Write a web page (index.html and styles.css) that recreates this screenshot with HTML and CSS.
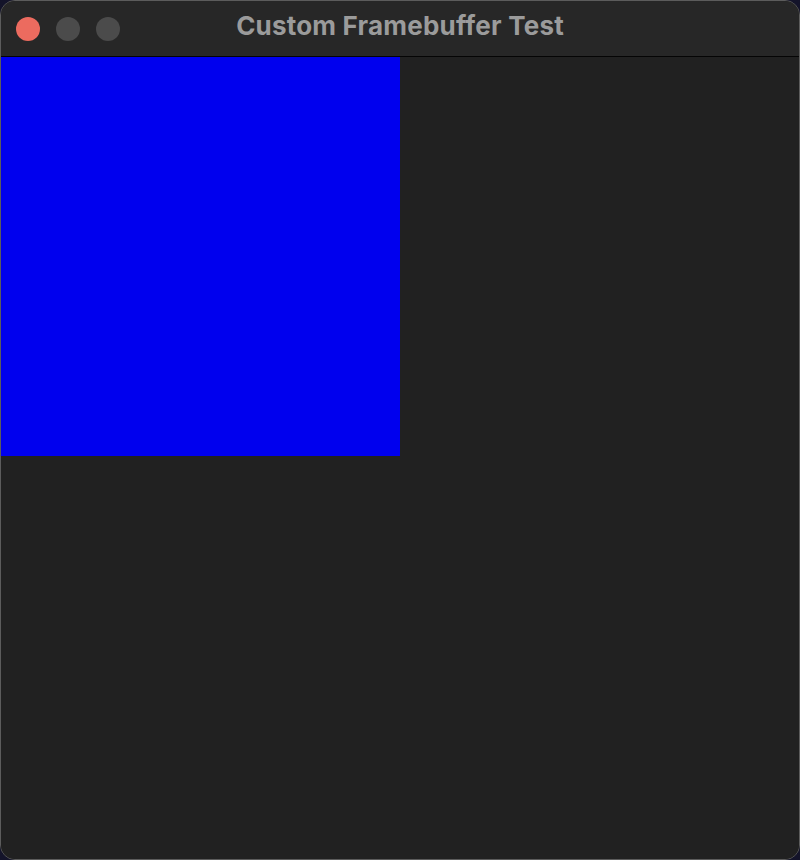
FILE: index.html
```html
<!DOCTYPE html>
<html>
<head>
<meta charset="utf-8">
<link rel="stylesheet" href="styles.css">
</head>
<body>
<div class="window">
  <div class="titlebar">
    <div class="lights">
      <span class="light close"></span>
      <span class="light"></span>
      <span class="light"></span>
    </div>
    <div class="title">Custom Framebuffer Test</div>
  </div>
  <div class="content">
    <div class="fb"></div>
  </div>
</div>
</body>
</html>
```

FILE: styles.css
```css
html, body {
  margin: 0;
  padding: 0;
  background: #14142a;
  width: 800px;
  height: 860px;
  overflow: hidden;
}
.window {
  box-sizing: border-box;
  width: 800px;
  height: 860px;
  border: 1px solid #5c5c5c;
  border-radius: 15px;
  overflow: hidden;
  display: flex;
  flex-direction: column;
  background: #212121;
}
.titlebar {
  height: 55px;
  flex: none;
  background: #272727;
  border-bottom: 1px solid #050505;
  display: flex;
  align-items: center;
  position: relative;
}
.lights {
  display: flex;
  gap: 16px;
  padding-left: 15px;
}
.light {
  width: 24px;
  height: 24px;
  border-radius: 50%;
  background: #4b4b4b;
}
.light.close {
  background: #ec6b5f;
}
.title {
  position: absolute;
  left: 0;
  right: 0;
  top: 8px;
  text-align: center;
  font-family: "Inter", "Liberation Sans", sans-serif;
  font-weight: 700;
  font-size: 26px;
  line-height: 34px;
  letter-spacing: 0.2px;
  color: #9b9b9b;
}
.content {
  flex: 1;
  background: #212121;
}
.fb {
  width: 399px;
  height: 399px;
  background: #0000ee;
}
```
